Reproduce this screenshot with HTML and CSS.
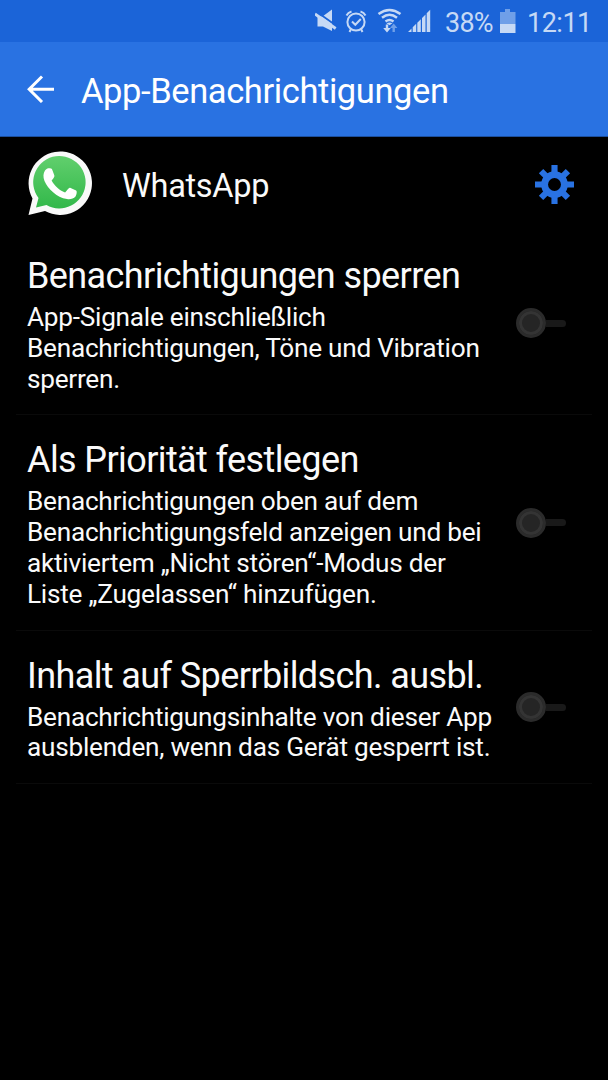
FILE: index.html
```html
<!DOCTYPE html>
<html lang="de">
<head>
<meta charset="utf-8">
<title>App-Benachrichtigungen</title>
<link rel="stylesheet" href="styles.css">
</head>
<body>
<div class="statusbar">
  <svg class="status-icons" width="120" height="42" viewBox="0 0 120 42">
    <g fill="#c6d9f5">
      <path d="M2.500 16.500h5L17 9.500V31L8 26.500H2.500z"/>
      <path d="M2 12L21 25.500" stroke="#1b64d8" stroke-width="1.800"/>
      <path d="M0 14L20.700 28.500" stroke="#c6d9f5" stroke-width="2.800"/>
      <g fill="none" stroke="#c6d9f5" stroke-width="2">
        <circle cx="41" cy="22" r="8.600"/>
        <path d="M37 21.500l3.300 3.300 5.500-5.800M31.500 15.500q1.500-3 5-4M50.500 15.500q-1.500-3-5-4M36 29l-1.500 3M46 29l1.500 3"/>
      </g>
      <g fill="none" stroke="#c6d9f5" stroke-width="2.500">
        <path d="M63.500 14q11-8 22 0M67 17.800q7.500-6 15 0M70.500 21.500q4-3 8 0"/>
      </g>
      <path d="M71.500 23.200q3-1.500 6 0l-3 2z"/>
      <path d="M70.800 24.500h2.400V28h2.600L72 32.500 68.200 28h2.600z"/>
      <path d="M77.500 32v-4H75l3.700-4.500 3.700 4.500h-2.500v4z" fill="#6f9fe8"/>
      <path d="M93 32l3.500-3.500V32zM97.700 27.300l3.500-3.500V32h-3.500zM102.300 22.700l3.500-3.500V32h-3.500zM107 18l3.500-3.500V32H107zM111.700 13.300l3.500-3.500V32h-3.500z"/>
    </g>
  </svg>
  <span class="percent">38%</span>
  <svg class="battery" width="16" height="24" viewBox="0 0 16 24">
    <path d="M0 3h5V0h5v3h5.500v12H0z" fill="#6f9fe8"/>
    <path d="M0 15h15.500v9H0z" fill="#c6d9f5"/>
  </svg>
  <span class="clock">12:11</span>
</div>
<header class="appbar">
  <svg class="back" width="28" height="28" viewBox="0 0 28 28" fill="none" stroke="#fff" stroke-width="3">
    <path d="M27 14.200H3M15 1.500L2.200 14.200 15 27"/>
  </svg>
  <h1 class="appbar-title">App-Benachrichtigungen</h1>
</header>
<main>
  <div class="app-row">
    <svg class="logo" width="65" height="65" viewBox="0 0 65 65">
      <defs><linearGradient id="green" x2="0" y2="1"><stop stop-color="#61cf6d"/><stop offset="1" stop-color="#32b84a"/></linearGradient></defs>
      <path d="M0.500 64L4.500 47.500A31.700 31.700 0 1 1 17 60z" fill="#f9f9f9"/>
      <path d="M8 56.500L10.500 47A26.200 26.200 0 1 1 18.500 54z" fill="url(#green)"/>
      <path d="M17 19.500C18.500 17.500 20 17 22 17.200c1.500 0 2 .8 2.500 2.300l1.800 4.800c.4 1.500-.2 2.300-2.700 5.200 3.500 6 7.500 9.500 13.500 12 2.500-2.900 3.700-5.200 5-4.700l6 2.800c1.200.7.500 4.400-.6 6-2 2.300-5.500 3.100-8.500 2.500-10.500-2-19-10.200-22.500-18.200-1.600-3.800-1.300-7.800.5-10.400z" fill="#fff"/>
    </svg>
    <span class="app-name">WhatsApp</span>
    <svg class="gear" width="39" height="39" viewBox="-19 -19 38 38">
      <g fill="#2972e2">
        <path d="M-3-19h6v38h-6z"/>
        <path d="M-3-19h6v38h-6z" transform="rotate(90)"/>
        <path d="M-3-18.500h6v37h-6z" transform="rotate(45)"/>
        <path d="M-3-18.500h6v37h-6z" transform="rotate(135)"/>
        <circle r="13"/>
      </g>
      <circle r="6.300" fill="#000"/>
    </svg>
  </div>
  <section class="setting">
    <div class="copy">
      <h2 class="title">Benachrichtigungen sperren</h2>
      <p class="desc">App-Signale einschließlich<br>Benachrichtigungen, Töne und Vibration<br>sperren.</p>
    </div>
    <span class="toggle"><span class="knob"></span><span class="track"></span></span>
  </section>
  <section class="setting">
    <div class="copy">
      <h2 class="title">Als Priorität festlegen</h2>
      <p class="desc">Benachrichtigungen oben auf dem<br>Benachrichtigungsfeld anzeigen und bei<br>aktiviertem „Nicht stören“-Modus der<br>Liste „Zugelassen“ hinzufügen.</p>
    </div>
    <span class="toggle"><span class="knob"></span><span class="track"></span></span>
  </section>
  <section class="setting">
    <div class="copy">
      <h2 class="title">Inhalt auf Sperrbildsch. ausbl.</h2>
      <p class="desc">Benachrichtigungsinhalte von dieser App<br>ausblenden, wenn das Gerät gesperrt ist.</p>
    </div>
    <span class="toggle"><span class="knob"></span><span class="track"></span></span>
  </section>
</main>
</body>
</html>
```
FILE: styles.css
```css
* { box-sizing: border-box; }
body {
  margin: 0;
  min-height: 1080px;
  background: #000;
  color: #fafafa;
  font-family: Roboto, sans-serif;
}
h1, h2, p { margin: 0; font-weight: 400; }
svg { display: block; flex: none; }
.statusbar {
  height: 42px;
  padding-left: 315px;
  display: flex;
  background: #1b64d8;
  color: #c6d9f5;
  font-size: 27px;
  line-height: 46px;
  letter-spacing: -0.75px;
  font-weight: 400;
  white-space: nowrap;
}
.percent { width: 50px; margin-left: 10px; }
.battery { margin: 9px 0 0 5px; }
.clock { margin-left: 11px; letter-spacing: -0.5px; }
.appbar {
  height: 95px;
  padding-left: 27px;
  display: flex;
  align-items: center;
  background: #2972e2;
  border-bottom: 1px solid #1c4f9d;
}
.appbar-title {
  margin-left: 26px;
  padding-top: 3px;
  font-size: 34.5px;
  line-height: 40px;
  letter-spacing: -0.4px;
  color: #fff;
  white-space: nowrap;
}
.app-row {
  height: 94px;
  padding: 0 34px 0 28px;
  display: flex;
  align-items: center;
}
.logo { margin-top: -1px; }
.app-name { flex: 1; margin-left: 29px; padding-top: 4px; font-size: 32.5px; line-height: 38px; letter-spacing: -0.3px; }
.setting {
  margin: 0 16px;
  padding: 26px 26px 20px 11px;
  display: flex;
  justify-content: space-between;
  border-bottom: 1px solid #0a0a0a;
}
.copy { white-space: nowrap; }
.title { font-size: 36px; line-height: 39px; margin-bottom: 6px; letter-spacing: -0.6px; }
.desc { font-size: 26.2px; line-height: 30.8px; letter-spacing: -0.25px; }
.toggle { display: flex; align-items: center; align-self: center; width: 50px; margin-top: -5px; flex: none; }
.knob {
  width: 30px;
  height: 30px;
  border-radius: 50%;
  background: #252525;
  border: 3px solid #2b2b2b;
  box-shadow: inset 0 0 0 3px #343434;
}
.track { width: 20px; height: 7px; border-radius: 0 4px 4px 0; background: #191919; }
```
